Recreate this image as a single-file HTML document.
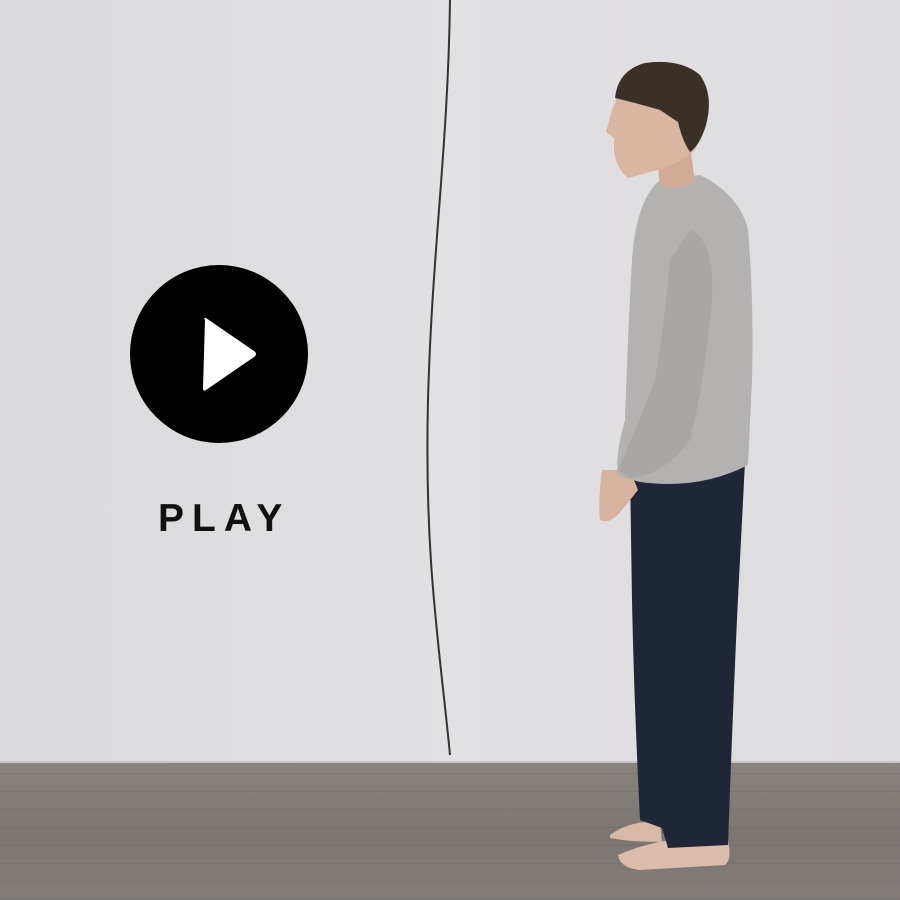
<!DOCTYPE html>
<html><head><style>
html,body{margin:0;padding:0}
body{width:900px;height:900px;position:relative;overflow:hidden;background:linear-gradient(90deg,#dad9db 0%,#e1e0e2 50%,#dddcde 100%);font-family:"Liberation Sans",sans-serif}
.floor{position:absolute;left:0;top:762px;width:900px;height:138px;background:linear-gradient(180deg,#8a8480 0%,#7c7672 50%,#827c78 100%)}
.play{position:absolute;left:158px;top:497px;font-size:39px;font-weight:bold;letter-spacing:8px;color:#111}
</style></head><body>
<div class="floor"></div>
<svg width="900" height="900" style="position:absolute;left:0;top:0">
<defs><pattern id="fl" width="900" height="18" patternUnits="userSpaceOnUse"><rect width="900" height="1" y="17" fill="#666" opacity=".35"/></pattern></defs>
<rect x="0" y="762" width="900" height="138" fill="url(#fl)"/>
<line x1="0" y1="762" x2="900" y2="762" fill="none" stroke="#c8c6c4" stroke-width="2"/>
<path d="M450 0 C448 150 432 250 428 400 C424 560 440 650 450 755" fill="none" stroke="#333" stroke-width="2"/>
<circle cx="219" cy="354" r="89" fill="#000"/>
<path d="M205 320 Q203 318 206 318 L254 351 Q258 354 254 357 L206 390 Q203 392 203 388 Z" fill="#fff"/>
<path d="M610 835 Q630 820 660 822 L662 842 Q630 842 610 838 Z" fill="#d8b8a6"/>
<path d="M618 855 Q640 845 670 840 L728 840 Q732 860 725 865 L640 870 Q620 868 618 855 Z" fill="#dcbcaa"/>
<path d="M630 470 L745 462 L740 560 Q735 650 728 845 L668 848 L662 828 L640 820 Q634 700 632 600 Z" fill="#1f2638"/>
<path d="M602 470 Q598 500 600 520 Q610 525 622 510 L638 490 L630 470 Z" fill="#d7b29f"/>
<path d="M660 180 L700 175 Q740 195 748 230 Q754 300 752 380 L748 465 Q700 490 640 482 L618 476 Q615 455 625 420 Q628 330 632 260 Q636 200 660 180 Z" fill="#b4b2b0"/>
<path d="M690 230 Q715 240 712 300 Q705 380 690 440 Q665 475 630 478 L618 470 Q640 420 655 380 Q665 320 670 260 Z" fill="#a9a7a5"/>
<path d="M655 145 L690 145 L695 182 Q675 192 660 185 Z" fill="#d2ab98"/>
<path d="M618 95 L612 110 L606 132 L614 138 L614 150 Q616 168 628 178 L650 172 Q680 165 695 150 Q708 125 700 95 Z" fill="#d9b5a2"/>
<path d="M615 98 Q618 70 645 63 Q680 58 700 75 Q714 95 706 125 Q700 145 690 152 Q682 140 678 122 L660 110 Q640 104 615 98 Z" fill="#3a3026"/>
</svg>
<div class="play">PLAY</div>
</body></html>
